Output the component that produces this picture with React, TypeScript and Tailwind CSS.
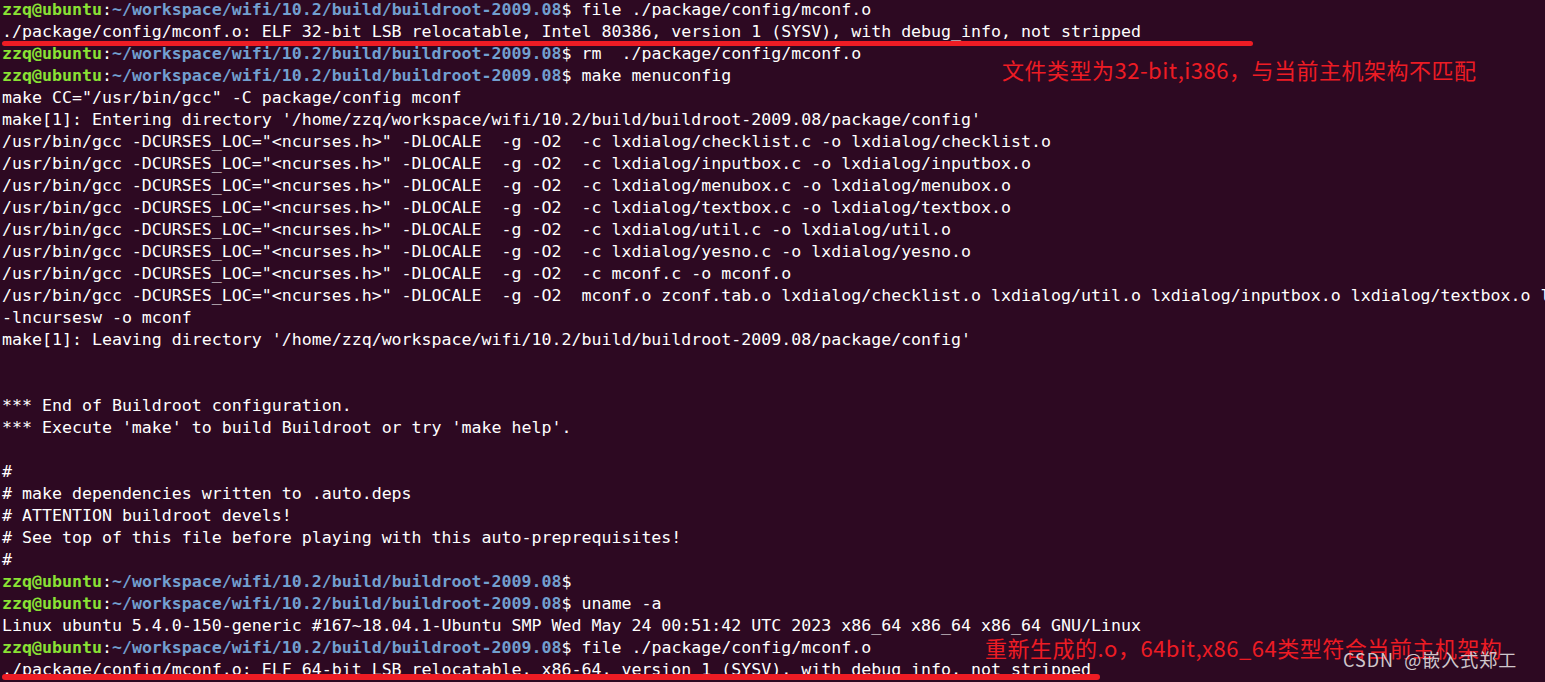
import React from "react";

const PATH = "~/workspace/wifi/10.2/build/buildroot-2009.08";
const GCC = '/usr/bin/gcc -DCURSES_LOC="<ncurses.h>" -DLOCALE  -g -O2  ';

function Prompt({ cmd }: { cmd: string }) {
  return (
    <>
      <span className="font-bold text-[#8ae234]">zzq@ubuntu</span>
      <span>:</span>
      <span className="font-bold text-[#729fcf]">{PATH}</span>
      <span>$</span>
      <span>{cmd}</span>
    </>
  );
}

type Line = { p?: string; t?: string };

const lines: Line[] = [
  { p: " file ./package/config/mconf.o" },
  { t: "./package/config/mconf.o: ELF 32-bit LSB relocatable, Intel 80386, version 1 (SYSV), with debug_info, not stripped" },
  { p: " rm  ./package/config/mconf.o" },
  { p: " make menuconfig" },
  { t: 'make CC="/usr/bin/gcc" -C package/config mconf' },
  { t: "make[1]: Entering directory '/home/zzq/workspace/wifi/10.2/build/buildroot-2009.08/package/config'" },
  { t: GCC + "-c lxdialog/checklist.c -o lxdialog/checklist.o" },
  { t: GCC + "-c lxdialog/inputbox.c -o lxdialog/inputbox.o" },
  { t: GCC + "-c lxdialog/menubox.c -o lxdialog/menubox.o" },
  { t: GCC + "-c lxdialog/textbox.c -o lxdialog/textbox.o" },
  { t: GCC + "-c lxdialog/util.c -o lxdialog/util.o" },
  { t: GCC + "-c lxdialog/yesno.c -o lxdialog/yesno.o" },
  { t: GCC + "-c mconf.c -o mconf.o" },
  { t: GCC + "mconf.o zconf.tab.o lxdialog/checklist.o lxdialog/util.o lxdialog/inputbox.o lxdialog/textbox.o lxdialog/yesno.o lxdialog/menubox.o" },
  { t: "-lncursesw -o mconf" },
  { t: "make[1]: Leaving directory '/home/zzq/workspace/wifi/10.2/build/buildroot-2009.08/package/config'" },
  { t: "" },
  { t: "" },
  { t: "*** End of Buildroot configuration." },
  { t: "*** Execute 'make' to build Buildroot or try 'make help'." },
  { t: "" },
  { t: "#" },
  { t: "# make dependencies written to .auto.deps" },
  { t: "# ATTENTION buildroot devels!" },
  { t: "# See top of this file before playing with this auto-preprequisites!" },
  { t: "#" },
  { p: "" },
  { p: " uname -a" },
  { t: "Linux ubuntu 5.4.0-150-generic #167~18.04.1-Ubuntu SMP Wed May 24 00:51:42 UTC 2023 x86_64 x86_64 x86_64 GNU/Linux" },
  { p: " file ./package/config/mconf.o" },
  { t: "./package/config/mconf.o: ELF 64-bit LSB relocatable, x86-64, version 1 (SYSV), with debug_info, not stripped" },
];

export default function App() {
  return (
    <div className="relative h-[682px] w-[1545px] overflow-hidden bg-[#2d0922] text-white">
      <div
        className="flex flex-col pl-[2px] -mt-[1px] text-[16.6px] leading-[22px]"
        style={{ fontFamily: '"DejaVu Sans Mono", "Liberation Mono", monospace' }}
      >
        {lines.map((l, i) => (
          <div key={i} className="h-[22px] whitespace-pre">
            {l.p !== undefined ? <Prompt cmd={l.p} /> : l.t}
          </div>
        ))}
      </div>

      {/* red underline marks */}
      <div className="absolute left-[2px] top-[41px] h-[5px] w-[1251px] rounded-full bg-[#ed1c24]" />
      <div className="absolute left-[2px] top-[674px] h-[6px] w-[1098px] rounded-full bg-[#ed1c24]" />

      {/* annotations */}
      <div
        className="absolute left-[1002px] top-[57px] whitespace-nowrap text-[22px] leading-[24px] tracking-[0.5px] text-[#ed1c24]"
        style={{ fontFamily: '"Noto Sans CJK SC", sans-serif' }}
      >
        文件类型为32-bit,i386，与当前主机架构不匹配
      </div>
      <div
        className="absolute left-[985px] top-[635px] whitespace-nowrap text-[22px] leading-[24px] tracking-[0.5px] text-[#ed1c24]"
        style={{ fontFamily: '"Noto Sans CJK SC", sans-serif' }}
      >
        重新生成的.o，64bit,x86_64类型符合当前主机架构
      </div>
      <div
        className="absolute left-[1343px] top-[649px] flex gap-[10px] whitespace-nowrap text-[18px] leading-[20px] tracking-[1px] text-[#cfc6cb]"
        style={{ fontFamily: '"Noto Sans CJK SC", sans-serif' }}
      >
        <span>CSDN</span>
        <span>@嵌入式郑工</span>
      </div>
    </div>
  );
}
